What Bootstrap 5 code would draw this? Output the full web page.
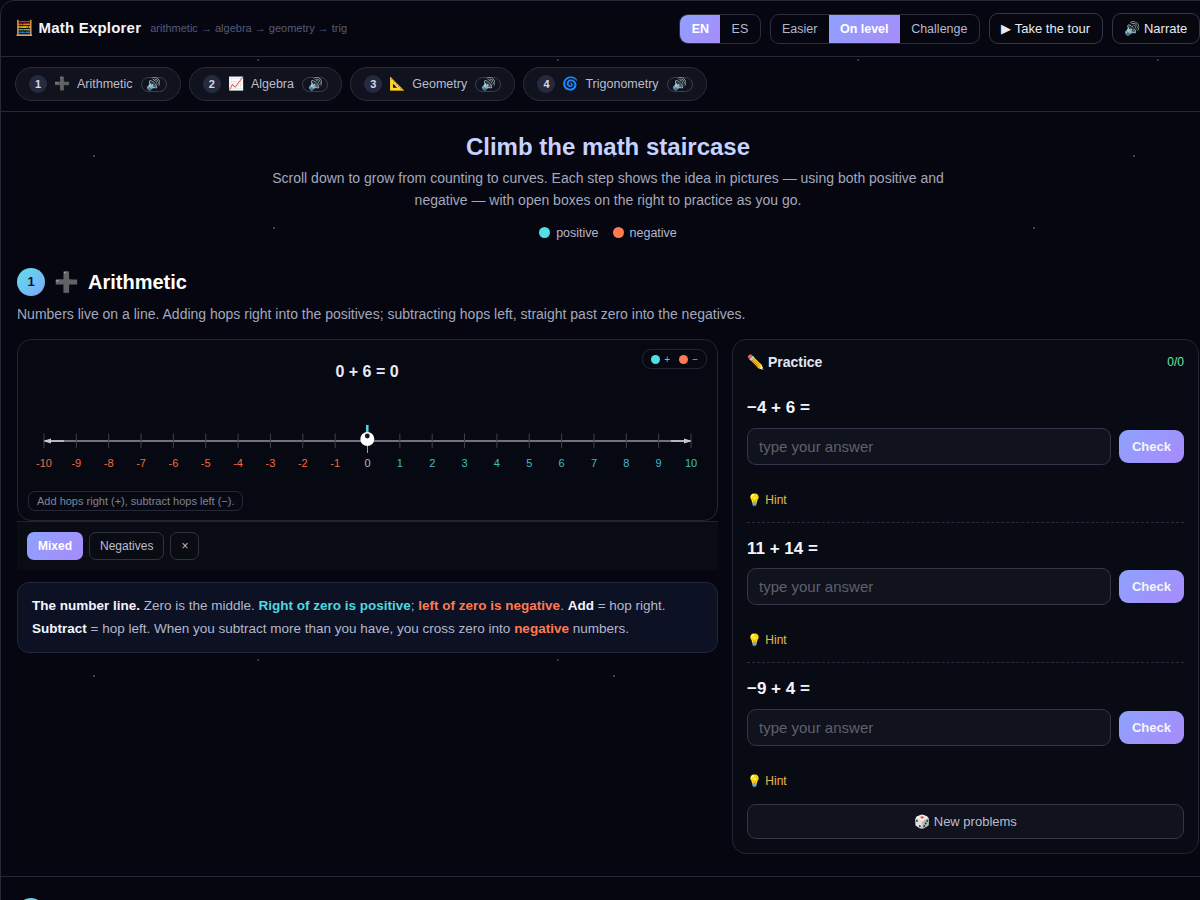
<!DOCTYPE html>
<html lang="en">
<head>
  <meta charset="UTF-8" />
  <meta name="viewport" content="width=device-width, initial-scale=1" />
  <title>Math Explorer</title>
  <link href="https://cdn.jsdelivr.net/npm/bootstrap@5.3.0/dist/css/bootstrap.min.css" rel="stylesheet" />
  <style>
    html, body { background: #05060f; overflow: hidden; height: 900px; }
    body { font-family: "Liberation Sans", Arial, sans-serif; color: #e8eaf6; }
    .app-shell {
      width: 1216px; height: 1400px; border: 1px solid #262838; border-radius: 14px 14px 0 0;
      background-color: #05060f;
      background-image:
        radial-gradient(circle at 93px 155px, #555a70 .6px, transparent 1px),
        radial-gradient(circle at 273px 227px, #555a70 .6px, transparent 1px),
        radial-gradient(circle at 257px 59px, #444858 .6px, transparent 1px);
      background-size: 520px 520px, 760px 760px, 300px 600px;
    }
    .top-bar { height: 56px; padding: 0 15px 0 14px; border-bottom: 1px solid #262838; }
    .top-tools { gap: 9px; }
    .brand-name { font-size: 15px; font-weight: 700; letter-spacing: .2px; color: #f4f5fb; }
    .brand-trail { font-size: 11px; color: #565a7a; margin-left: 9px; }
    .seg-group { border: 1px solid #2c2e3e; border-radius: 9px; overflow: hidden; height: 30px; }
    .seg-btn { border: 0; background: transparent; color: #b4b8cc; font-size: 12.5px; padding: 0 11.3px; line-height: 28px; }
    .seg-on { background: linear-gradient(135deg, #8ea2ff, #a78bfa); color: #fff; font-weight: 700; }
    .ghost-btn { height: 31px; border: 1px solid #33354a; border-radius: 9px; background: #07080f; color: #e8eaf6; font-size: 13px; padding: 0 11.7px; white-space: nowrap; }
    .tab-row { height: 55px; padding: 0 14px; border-bottom: 1px solid #262838; }
    .step-pill { height: 34px; border: 1px solid #2a2c3c; border-radius: 17px; background: #10121d; color: #b9bdd0; font-size: 12.5px; padding: 0 13px; gap: 7px; white-space: nowrap; }
    .step-num { width: 18px; height: 18px; border-radius: 50%; background: #262a40; color: #d6d9ea; font-size: 11px; font-weight: 700; line-height: 18px; text-align: center; }
    .pill-ico { font-size: 13px; }
    .pill-say { width: 26px; height: 15px; border: 1px solid #3c3f52; border-radius: 8px; font-size: 12px; line-height: 13px; text-align: center; margin-left: 1.3px; }
    .hero-box { padding-top: 20px; height: 156px; }
    .hero-title { font-size: 24px; font-weight: 700; color: #c7d2fe; margin: 0 0 6px; line-height: 29px; }
    .hero-sub { width: 700px; margin: 0 auto; font-size: 14px; line-height: 22px; color: #a4a8bd; }
    .hero-key { margin-top: 13px; font-size: 12.5px; color: #b4b8cc; gap: 14px; }
    .dot-pos, .dot-neg { display: inline-block; width: 11px; height: 11px; border-radius: 50%; vertical-align: -1px; margin-right: 6px; }
    .dot-pos { background: #4fe0e8; }
    .dot-neg { background: #ff7a50; }
    .step-section { padding: 0 16px 22px; border-bottom: 1px solid #262838; }
    .next-section { padding: 21px 16px; }
    .step-head { height: 28px; gap: 9px; }
    .step-badge { width: 28px; height: 28px; border-radius: 50%; background: linear-gradient(135deg, #5fe0ea, #7ea6fb); color: #0a1030; font-size: 13px; font-weight: 700; line-height: 28px; text-align: center; }
    .step-ico { font-size: 20px; line-height: 28px; }
    .step-name { font-size: 20px; font-weight: 700; color: #fff; margin: 0; }
    .step-desc { font-size: 14px; color: #a4a8bd; margin: 8px 0 15px; line-height: 20px; }
    .step-grid { display: grid; grid-template-columns: 3fr 2fr; gap: 14px; align-items: start; }
    .viz-card { position: relative; height: 182px; border: 1px solid #232534; border-radius: 14px; background: #070912; }
    .viz-card svg { display: block; }
    .viz-key { position: absolute; top: 9px; right: 10px; height: 20px; padding: 0 8px; border: 1px solid #232534; border-radius: 9px; font-size: 10px; color: #a4a8bd; gap: 9px; }
    .viz-key span span { width: 9px; height: 9px; margin-right: 4px; vertical-align: -1px; }
    .viz-note { position: absolute; left: 10px; top: 151px; height: 20px; padding: 0 8px; border: 1px solid #262838; border-radius: 7px; font-size: 11px; line-height: 18px; color: #808499; }
    .mode-strip { height: 49px; background: #0a0c14; border-top: 1px solid #20222e; padding: 10px; gap: 6px; }
    .mode-btn { height: 28px; border: 1px solid #30323f; border-radius: 7px; background: transparent; color: #b9bdd0; font-size: 12px; padding: 0 10px; }
    .mode-on { border: 0; background: linear-gradient(135deg, #8ea2ff, #a78bfa); color: #fff; font-weight: 700; padding: 0 11px; }
    .explain-box { margin-top: 12px; height: 71px; padding: 11px 14px; background: #0c1124; border: 1px solid #23263a; border-radius: 12px; font-size: 13.5px; line-height: 23px; color: #b4b8cc; }
    .explain-box b { color: #f4f5fb; }
    .explain-box b.txt-pos { color: #4fd8df; }
    .explain-box b.txt-neg { color: #ff7a50; }
    .practice-box { height: 515px; padding: 13px 14px; background: #090b14; border: 1px solid #232534; border-radius: 14px; }
    .practice-head { margin-bottom: 12px; }
    .practice-title { font-size: 14px; font-weight: 700; color: #e4e6f4; line-height: 18px; }
    .practice-score { font-size: 12px; color: #6ee7a0; }
    .prob-item { height: 140px; padding-top: 15px; border-bottom: 1px dashed #2a2c3c; }
    .prob-item + .prob-item { padding-top: 16px; }
    .prob-item.prob-end { border-bottom: 0; height: 141px; }
    .prob-text { font-size: 17px; font-weight: 700; color: #f4f5fb; line-height: 20px; margin-bottom: 10px; }
    .prob-item + .prob-item .prob-text { margin-bottom: 9px; }
    .prob-item.prob-end .prob-text { margin-bottom: 10px; }
    .prob-input.form-control { height: 37px; background: #10121d; border: 1px solid #33354a; border-radius: 9px; color: #fff; font-size: 15px; padding: 0 11px; }
    .prob-input.form-control::placeholder { color: #5e606c; }
    .prob-check { width: 65px; height: 33px; border: 0; border-radius: 9px; background: linear-gradient(135deg, #8ea2ff, #a78bfa); color: #f4f5fb; font-size: 13px; font-weight: 700; padding: 0; }
    .prob-hint { margin-top: 27px; font-size: 12px; line-height: 16px; color: #e8b84a; }
    .more-btn { display: block; width: 100%; height: 35px; border: 1px solid #33354a; border-radius: 9px; background: #10121d; color: #b9bdd0; font-size: 13px; padding: 0; }
  </style>
</head>
<body>
  <div class="app-shell">

    <header class="top-bar d-flex align-items-center justify-content-between">
      <div class="d-flex align-items-center">
        <span class="brand-name">🧮 Math Explorer</span>
        <span class="brand-trail">arithmetic → algebra → geometry → trig</span>
      </div>
      <div class="top-tools d-flex align-items-center">
        <div class="seg-group d-flex">
          <button class="seg-btn seg-on">EN</button>
          <button class="seg-btn">ES</button>
        </div>
        <div class="seg-group d-flex">
          <button class="seg-btn">Easier</button>
          <button class="seg-btn seg-on">On level</button>
          <button class="seg-btn">Challenge</button>
        </div>
        <button class="ghost-btn">▶ Take the tour</button>
        <button class="ghost-btn">🔊 Narrate</button>
      </div>
    </header>

    <nav class="tab-row d-flex align-items-center gap-2">
      <div class="step-pill d-flex align-items-center"><span class="step-num">1</span><span class="pill-ico">➕</span>Arithmetic<span class="pill-say">🔊</span></div>
      <div class="step-pill d-flex align-items-center"><span class="step-num">2</span><span class="pill-ico">📈</span>Algebra<span class="pill-say">🔊</span></div>
      <div class="step-pill d-flex align-items-center"><span class="step-num">3</span><span class="pill-ico">📐</span>Geometry<span class="pill-say">🔊</span></div>
      <div class="step-pill d-flex align-items-center"><span class="step-num">4</span><span class="pill-ico">🌀</span>Trigonometry<span class="pill-say">🔊</span></div>
    </nav>

    <div class="hero-box text-center">
      <h1 class="hero-title">Climb the math staircase</h1>
      <p class="hero-sub">Scroll down to grow from counting to curves. Each step shows the idea in pictures — using both positive and negative — with open boxes on the right to practice as you go.</p>
      <div class="hero-key d-flex justify-content-center">
        <span><span class="dot-pos"></span>positive</span>
        <span><span class="dot-neg"></span>negative</span>
      </div>
    </div>

    <section class="step-section">
      <div class="step-head d-flex align-items-center">
        <span class="step-badge">1</span>
        <span class="step-ico">➕</span>
        <h2 class="step-name">Arithmetic</h2>
      </div>
      <p class="step-desc">Numbers live on a line. Adding hops right into the positives; subtracting hops left, straight past zero into the negatives.</p>

      <div class="step-grid">
        <div>
          <div class="viz-card">
            <svg id="numline" width="699" height="150" viewBox="18 340 699 150"></svg>
            <div class="viz-key d-flex align-items-center">
              <span><span class="dot-pos"></span>+</span>
              <span><span class="dot-neg"></span>−</span>
            </div>
            <div class="viz-note">Add hops right (+), subtract hops left (−).</div>
          </div>
          <div class="mode-strip d-flex">
            <button class="mode-btn mode-on">Mixed</button>
            <button class="mode-btn">Negatives</button>
            <button class="mode-btn">×</button>
          </div>
          <div class="explain-box">
            <b>The number line.</b> Zero is the middle. <b class="txt-pos">Right of zero is positive</b>; <b class="txt-neg">left of zero is negative</b>. <b>Add</b> = hop right. <b>Subtract</b> = hop left. When you subtract more than you have, you cross zero into <b class="txt-neg">negative</b> numbers.
          </div>
        </div>

        <aside class="practice-box">
          <div class="practice-head d-flex justify-content-between align-items-center">
            <span class="practice-title">✏️ Practice</span>
            <span class="practice-score">0/0</span>
          </div>
          <div class="prob-item">
            <div class="prob-text">−4 + 6 =</div>
            <div class="d-flex align-items-center gap-2">
              <input class="form-control prob-input" placeholder="type your answer" />
              <button class="prob-check flex-shrink-0">Check</button>
            </div>
            <div class="prob-hint">💡 Hint</div>
          </div>
          <div class="prob-item">
            <div class="prob-text">11 + 14 =</div>
            <div class="d-flex align-items-center gap-2">
              <input class="form-control prob-input" placeholder="type your answer" />
              <button class="prob-check flex-shrink-0">Check</button>
            </div>
            <div class="prob-hint">💡 Hint</div>
          </div>
          <div class="prob-item prob-end">
            <div class="prob-text">−9 + 4 =</div>
            <div class="d-flex align-items-center gap-2">
              <input class="form-control prob-input" placeholder="type your answer" />
              <button class="prob-check flex-shrink-0">Check</button>
            </div>
            <div class="prob-hint">💡 Hint</div>
          </div>
          <button class="more-btn">🎲 New problems</button>
        </aside>
      </div>
    </section>

    <section class="next-section">
      <div class="step-head d-flex align-items-center">
        <span class="step-badge">2</span>
        <span class="step-ico">📈</span>
        <h2 class="step-name">Algebra</h2>
      </div>
    </section>
  </div>

  <script>
    const svg = document.getElementById("numline");
    let out = '<text x="367" y="377" text-anchor="middle" font-size="16" font-weight="700" fill="#e8eaf6">0 + 6 = 0</text>';
    out += '<line x1="44" y1="441" x2="691" y2="441" stroke="#70727c" stroke-width="2"/>';
    out += '<line x1="44" y1="441" x2="64" y2="441" stroke="#b4b6bc" stroke-width="2"/>';
    out += '<line x1="671" y1="441" x2="691" y2="441" stroke="#b4b6bc" stroke-width="2"/>';
    out += '<polygon points="43,441 51,438.5 51,443.5" fill="#c8c9ce"/><polygon points="692,441 684,438.5 684,443.5" fill="#c8c9ce"/>';
    for (let n = -10; n <= 10; n++) {
      const x = 44 + (n + 10) * 32.35;
      const color = n < 0 ? "#f0693f" : n > 0 ? "#40bcc6" : "#b4b8cc";
      out += `<line x1="${x}" y1="433.5" x2="${x}" y2="${n === 0 ? 453 : 448}" stroke="${n === 0 ? "#9a9ca6" : "#3e404c"}" stroke-width="1"/>`;
      out += `<text x="${x}" y="467" text-anchor="middle" font-size="11" fill="${color}">${n}</text>`;
    }
    out += '<line x1="367.3" y1="425" x2="367.3" y2="434" stroke="#4fd8df" stroke-width="2.5"/>';
    out += '<circle cx="367.3" cy="439" r="7" fill="#fff"/><circle cx="367.3" cy="436" r="2.4" fill="#101828"/>';
    svg.innerHTML = out;
  </script>
  <script src="https://cdn.jsdelivr.net/npm/bootstrap@5.3.0/dist/js/bootstrap.bundle.min.js"></script>
</body>
</html>
